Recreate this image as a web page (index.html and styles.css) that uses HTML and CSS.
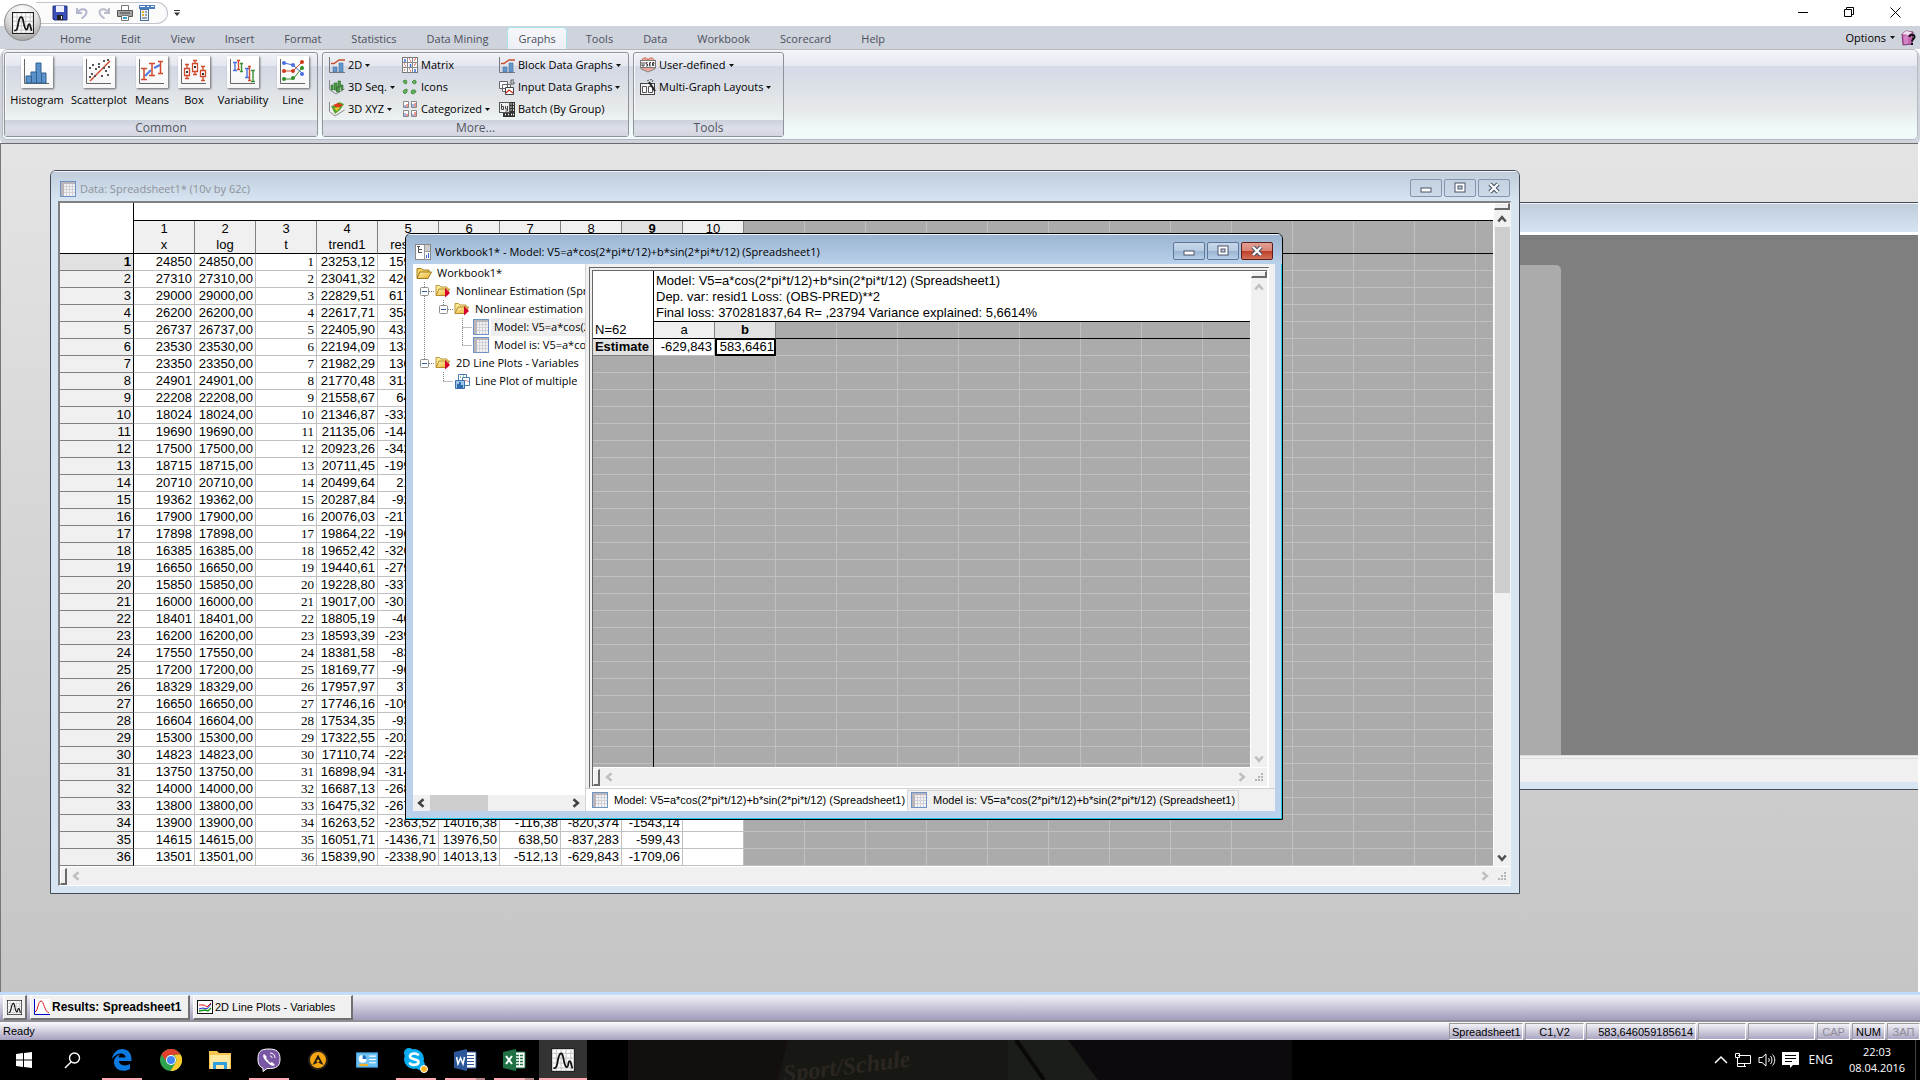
FILE: index.html
```html
<!DOCTYPE html>
<html lang="en">
<head>
<meta charset="utf-8">
<title>STATISTICA - Workbook1*</title>
<link rel="stylesheet" href="styles.css">
</head>
<body>
<svg class="defs" aria-hidden="true">
  <defs>
    <linearGradient id="g-folder" x1="0" y1="0" x2="1" y2="1"><stop offset="0" stop-color="#fff3b0"/><stop offset="1" stop-color="#e8ac28"/></linearGradient>
    <symbol id="i-sheet" viewBox="0 0 16 16"><rect x=".5" y=".5" width="15" height="15" fill="#f2f2f4" stroke="#6d93c4"/><path d="M1 1h14v2H1zM1 1h3v14H1z" fill="#b9b5b8"/><path d="M6.500 3v12M9.500 3v12M12.500 3v12M4 5.500h11M4 8.500h11M4 11.500h11" stroke="#d3d1d8"/></symbol>
    <symbol id="i-book" viewBox="0 0 16 16"><rect x=".5" y=".5" width="15" height="15" fill="#fff" stroke="#888"/><path d="M9.500 1v14M10 7.500h5" stroke="#999"/><path d="M10 1h5v6h-5z" fill="#ccc"/><path d="M2 2.500h3M3.500 3v6M3.500 5.500H7M3.500 8.500H7" stroke="#555" fill="none"/><path d="M11.500 14v-3M13.500 14V9" stroke="#3465c8"/></symbol>
    <symbol id="i-folder" viewBox="0 0 16 16"><path d="M1 13V3.500h4.500l1.500 1.500h6v2" fill="#f3d060" stroke="#a58222"/><path d="M1 13.500 4 7h11.500L12 13.500z" fill="url(#g-folder)" stroke="#a07a1c"/></symbol>
    <symbol id="i-folderrun" viewBox="0 0 16 16"><path d="M1 12V2.500h3.500l1.500 1.500h6v2" fill="#fae892" stroke="#bd9738"/><path d="M1 12.500 4 6h10.500L12 12.500z" fill="url(#g-folder)" stroke="#b48b2c"/><path d="M10 5v9.500l5-4.500z" fill="#d6002c"/></symbol>
    <symbol id="i-plots" viewBox="0 0 16 16"><path d="M4.500 1.500h8v8h-8z" fill="#fff" stroke="#4a7cb5"/><path d="M6 4h1M9 3h1M11 5h1" stroke="#3a3"/><path d="M8.500 4.500h7v8h-7z" fill="#fff" stroke="#4a7cb5"/><path d="m9 11 3-4 3 2" stroke="#d88" fill="none"/><path d="M1.500 7.500h9v8h-9z" fill="#9fc5ea" stroke="#3b6ea6"/><path d="M3 15v-4h2v-2h2v3h2v3z" fill="#2f6cb0"/></symbol>
    <symbol id="i-2d" viewBox="0 0 16 16"><path d="M.5 0v15.500H16" stroke="#777" fill="none"/><path d="M2 6.500h3l5-3.500h6" stroke="#c8502a" stroke-width="1.500" fill="none"/><path d="M4 10h4v5H4zM10 6h4v9h-4z" fill="#6396cc" stroke="#44729f" stroke-width=".6"/></symbol>
    <symbol id="i-3ds" viewBox="0 0 16 16"><path d="M.5 1v9.500L7 15l8.500-5" stroke="#888" fill="none"/><path d="M2 6h2v5H2zM5 4h3v7H5zM9 2h2.500v6H9zM7.500 8h3v5h-3zM12 6h2v5h-2z" fill="#4e9a47" stroke="#2b6b2a" stroke-width=".6"/></symbol>
    <symbol id="i-3dx" viewBox="0 0 16 16"><path d="M.5 1v9.500L6 15l9.500-6" stroke="#888" fill="#f0f0f0"/><path d="m2 5 4-1 4-3 5 2-4 6-5 4z" fill="#57a12c"/><path d="m4 4 5-2 5 2-5 3z" fill="#e03a1c"/><path d="m5 7 6-1-3 4z" fill="#f2c928"/></symbol>
    <symbol id="i-matrix" viewBox="0 0 16 16"><rect x=".5" y=".5" width="15" height="15" fill="#fff" stroke="#777"/><path d="M5.500 0v16M10.500 0v16M0 5.500h16M0 10.500h16" stroke="#888"/><path d="M3 2v3M8.500 7v3M13 12v3" stroke="#3b6be0" stroke-width="1.500"/><path d="M7 2h1M8 4h1M12 3h1M13 2h1M2 7h1M3 9h1M12 8h1M13 7h1M2 13h1M7 12h1M8 14h1" stroke="#e0301c" stroke-width="1.200"/></symbol>
    <symbol id="i-icons" viewBox="0 0 16 16"><path d="m1 2 3-1 1 2-1 2-2-1zM10 3l2-2 2 1v2l-2 1zM2 11l3-1v3l-2 2-2-2zM10 11h3l1 2-3 2-2-1z" fill="#67ad61" stroke="#4b9246"/></symbol>
    <symbol id="i-cat" viewBox="0 0 16 16"><path d="M1.500.5h5v6h-5zM9.500.5h5v6h-5zM1.500 9.500h5v6h-5zM9.500 9.500h5v6h-5z" fill="#fff" stroke="#888"/><path d="M3 6V4M11 6V3M3 15v-3M11 15v-2" stroke="#3b6be0"/><path d="M5 6V3M13 6V2M5 15v-2M13 15v-4" stroke="#e0301c"/></symbol>
    <symbol id="i-input" viewBox="0 0 16 16"><path d="M.5 2.500h8v7h-8zM3.500 5.500h8v7h-8z" fill="#fff" stroke="#666"/><path d="M6.500 8.500h8v7h-8z" fill="#fff" stroke="#444"/><path d="m7 14 3-3 4 3" stroke="#d03018" stroke-width="1.300" fill="none"/><path d="M15 1h-3v4h3V3h-1.500" stroke="#555" fill="none"/></symbol>
    <symbol id="i-batch" viewBox="0 0 16 16"><path d="M10 1h6v15H4v-4" fill="#333"/><path d="M11.500 3h1M14 3h1M11.500 6h1M14 6h1M11.500 9h1M14 9h1M6 13.500h1M9 13.500h1M12 13.500h1M14 13.500h1" stroke="#fff" stroke-width="1.500"/><rect x=".5" y="1.500" width="10" height="10" fill="#eee" stroke="#555"/><path d="M2.500 3v5.500h2v-3h-2M6.500 5v3h2V5v5h-2" stroke="#444" fill="none"/></symbol>
    <symbol id="i-user" viewBox="0 0 16 16"><path d="M2 5a3 3 0 0 1 6-2 3 3 0 0 1 6 2" fill="#f0aa9a" stroke="#d0705c"/><path d="M1 9v3l7 3 7-3V9" fill="#e8a79a" stroke="#888"/><rect x=".5" y="3.500" width="15" height="7" fill="#fff" stroke="#777"/><path d="M2 5v4h2V5M7.500 5.500H6V7h1.500v2H6M11 5.500H9.500v3.500H11M9.500 7H11M12.500 9V5.500H14V7h-1l1 2" stroke="#444" fill="none"/></symbol>
    <symbol id="i-multi" viewBox="0 0 16 16"><rect x=".5" y="4.500" width="14" height="11" fill="#f4f4f4" stroke="#444"/><path d="M2.500 7.500h4v6h-4zM8.500 7.500h4v6h-4z" fill="#fff" stroke="#555"/><path d="m9 3 6 9" stroke="#222" stroke-width="2"/><path d="M7 2l2-1M10 1l2-1M8 4l-1 1M12 3l1-2" stroke="#555"/></symbol>
    <symbol id="i-caret" viewBox="0 0 5 3"><path d="M0 0h5L2.500 3z" fill="#111"/></symbol>
    <symbol id="i-logo" viewBox="0 0 20 20"><rect x=".5" y=".5" width="19" height="19" fill="#fff" stroke="#222"/><path d="M4.500 1v18M8.500 1v18M12.500 1v18M16.500 1v18M1 4.500h18M1 8.500h18M1 12.500h18M1 16.500h18" stroke="#ccc"/><path d="M2 17c3 0 3-3 4-8s3-6 4-2 1 8 3 9c2 0 1-5 2.500-5S17 16 18 17" stroke="#111" stroke-width="1.500" fill="none"/></symbol>
    <symbol id="a-up" viewBox="0 0 8 6"><path d="m1 5 3-3.500L7 5" fill="none" stroke="currentColor" stroke-width="2"/></symbol>
    <symbol id="a-down" viewBox="0 0 8 6"><path d="m1 1 3 3.500L7 1" fill="none" stroke="currentColor" stroke-width="2"/></symbol>
    <symbol id="a-left" viewBox="0 0 6 8"><path d="M5 1 1.500 4 5 7" fill="none" stroke="currentColor" stroke-width="2"/></symbol>
    <symbol id="a-right" viewBox="0 0 6 8"><path d="m1 1 3.500 3L1 7" fill="none" stroke="currentColor" stroke-width="2"/></symbol>
    <symbol id="a-grip" viewBox="0 0 9 9"><path d="M6 0h2v2H6zM3 3h2v2H3zM6 3h2v2H6zM0 6h2v2H0zM3 6h2v2H3zM6 6h2v2H6z" fill="#b4b4b4"/></symbol>
    <symbol id="w-min" viewBox="0 0 12 12"><rect x="1" y="6" width="10" height="4" fill="#fff" stroke="#4b5368"/></symbol>
    <symbol id="w-max" viewBox="0 0 12 12"><rect x="1" y="1" width="10" height="9" fill="#fff" stroke="#4b5368"/><rect x="4" y="4" width="4" height="3" fill="#c5d3e2" stroke="#4b5368"/></symbol>
    <symbol id="w-close" viewBox="0 0 12 12"><path d="m2 2 8 8M10 2l-8 8" stroke="#4b5368" stroke-width="4.500"/><path d="m2 2 8 8M10 2l-8 8" stroke="#fff" stroke-width="2.200"/></symbol>
  </defs>
</svg>

<header class="app-title">
  <button class="orb" aria-label="Application menu"><svg width="22" height="22"><use href="#i-logo"/></svg></button>
  <div class="quick">
    <button aria-label="Save"><svg width="16" height="16" viewBox="0 0 16 16"><path d="M1 1h14v14H2l-1-1z" fill="#3b4fb8" stroke="#26327f"/><path d="M4 1h8v6H4z" fill="#eef"/><path d="M5 10h6v5H5z" fill="#222"/><path d="M9 11h1v3H9z" fill="#fff"/></svg></button>
    <button aria-label="Undo"><svg width="16" height="16" viewBox="0 0 16 16"><path d="M3 3v5h5M3.500 7.500C6 3.500 12 3 12.500 7c0 3-2 4.500-5 6.500" fill="none" stroke="#b3b7cd" stroke-width="2"/></svg></button>
    <button aria-label="Redo"><svg width="16" height="16" viewBox="0 0 16 16"><path d="M13 3v5H8M12.500 7.500C10 3.500 4 3 3.500 7c0 3 2 4.500 5 6.500" fill="none" stroke="#b9bcc9" stroke-width="2"/></svg></button>
    <button aria-label="Print"><svg width="16" height="16" viewBox="0 0 16 16"><path d="M4.500.5h7v5h-7z" fill="#fff" stroke="#777"/><path d="M.5 5.500h15v6H.5z" fill="#a5a5a5" stroke="#555"/><path d="M3 8h10" stroke="#444"/><path d="M4.500 10.500h7v5h-7z" fill="#fff" stroke="#777"/><path d="M6 13h4" stroke="#3aa0d8" stroke-width="2"/></svg></button>
    <button aria-label="Layout"><svg width="16" height="16" viewBox="0 0 16 16"><path d="M0 0h16v4H0z" fill="#4a7dc0"/><path d="M1 1.500h5M8 1.500h2M12 1.500h3" stroke="#fff"/><rect x="1.500" y="4.500" width="8" height="11" fill="#e8f1fb" stroke="#4a6f9f"/><path d="M3 7h2M3 10h2" stroke="#e0b020" stroke-width="2"/><path d="M6 7h2M6 10h2M3 13h5" stroke="#555"/></svg></button>
  </div>
  <button class="quick-more" aria-label="Customize toolbar"><svg width="6" height="6" viewBox="0 0 6 6"><path d="M0 .5h6" stroke="#333"/><path d="M0 2.500h6L3 6z" fill="#333"/></svg></button>
  <div class="win-controls">
    <button aria-label="Minimize"><svg width="11" height="11"><path d="M0 5.500h10" stroke="#000"/></svg></button>
    <button aria-label="Restore"><svg width="11" height="11"><path d="M.5 2.500h7v7h-7zM2.500 2V.5h7v7H8" fill="none" stroke="#000"/></svg></button>
    <button aria-label="Close"><svg width="11" height="11"><path d="m.5.5 10 10M10.500.5l-10 10" stroke="#000"/></svg></button>
  </div>
</header>

<nav class="tabs">
  <button>Home</button><button>Edit</button><button>View</button><button>Insert</button><button>Format</button><button>Statistics</button><button>Data Mining</button><button class="on">Graphs</button><button>Tools</button><button>Data</button><button>Workbook</button><button>Scorecard</button><button>Help</button>
  <div class="options">
    <button>Options<svg width="5" height="3"><use href="#i-caret"/></svg></button>
    <button aria-label="Help"><svg width="16" height="16" viewBox="0 0 16 16"><path d="m1 4 4-3 7 1-1 12-9 1z" fill="#c468b4" stroke="#7b3a72"/><path d="m1 4 4-3 6 1-3 3z" fill="#f3e3f0"/><path d="M4 6v8M6 5v9" stroke="#e2a3d8"/><path d="M8.500 7c0-3 5-3 5 0 0 2-2.500 2-2.500 4.500M11 13v2" stroke="#111" stroke-width="2" fill="none"/></svg></button>
  </div>
</nav>

<section class="ribbon">
  <div class="group common">
    <div class="big-row">
      <button><svg class="tile" width="32" height="32" viewBox="0 0 32 32"><path d="M3.500 3v24.500H28" stroke="#666" fill="none"/><path d="M5 27v-7h5v-4h5V7h5v10h5v10z" fill="#5b92cc" stroke="#315f90"/><path d="M10.500 20v7M15.500 16v11M20.500 17v10" stroke="#315f90"/></svg>Histogram</button>
      <button><svg class="tile" width="32" height="32" viewBox="0 0 32 32"><path d="M3.500 3v24.500H28" stroke="#666" fill="none"/><path d="M7 25 27 5" stroke="#d04a2c" stroke-width="1.500"/><path d="M6 12h2M9 9h2M12 13h2M15 8h2M20 5h2M24 4h2M8 18h2M11 20h2M18 20h2M22 15h2M24 19h2M20 12h2M15 11h2M6 21h2M25 11h2" stroke="#555" stroke-width="2"/></svg>Scatterplot</button>
      <button><svg class="tile" width="32" height="32" viewBox="0 0 32 32"><path d="M3.500 3v24.500H28" stroke="#666" fill="none"/><path d="m9 20 6-6M18 12l6-3" stroke="#4a7de0" stroke-width="2"/><path d="M5 12.500h6M5 23.500h6M8 12v11M13 7.500h6M13 19.500h6M16 8v11M22 5.500h5M22 17.500h5M24.500 6v11" stroke="#d04a2c" stroke-width="1.500"/></svg>Means</button>
      <button><svg class="tile" width="32" height="32" viewBox="0 0 32 32"><path d="M3.500 3v24.500H28" stroke="#666" fill="none"/><path d="M6.500 12.500h5v7h-5zM14.500 7.500h5v8h-5zM22.500 14.500h5v6h-5zM9 8v4M9 20v3M17 4v3M17 16v3M25 10v4M25 21v3M7 8.500h4M7 22.500h4M15 4.500h4M15 18.500h4M23 10.500h4M23 24.500h4" stroke="#d04a2c" stroke-width="1.300" fill="none"/><path d="M8 16h2M16 11h2M24 18h2" stroke="#333" stroke-width="2"/></svg>Box</button>
      <button><svg class="tile" width="32" height="32" viewBox="0 0 32 32"><path d="M3.500 3v24.500H28" stroke="#666" fill="none"/><path d="M6 6.500h4M6 14.500h4M8 6v8M18 12.500h4M18 21.500h4M20 12v9" stroke="#4a6de0" stroke-width="1.400"/><path d="M10 4.500h3M10 13.500h3M11.500 5v8M21 10.500h3M21 24.500h3M22.500 11v13" stroke="#d04a2c" stroke-width="1.400"/><path d="M13 7.500h3M13 15.500h3M14.500 8v7M24 14.500h4M24 25.500h4M26 15v10" stroke="#3c8f35" stroke-width="1.400"/></svg>Variability</button>
      <button><svg class="tile" width="32" height="32" viewBox="0 0 32 32"><path d="M3.500 3v24.500H28" stroke="#666" fill="none"/><path d="m7 7 9 2 9 8" stroke="#4a6de0" fill="none"/><path d="M7 15h9l9-9" stroke="#d04a2c" fill="none"/><path d="M7 23h9l9-11" stroke="#3c8f35" fill="none"/><g fill="#4a6de0"><circle cx="7" cy="7" r="2"/><circle cx="16" cy="9" r="2"/><circle cx="25" cy="18" r="2"/></g><g fill="#d03a1c"><circle cx="7" cy="15" r="2"/><circle cx="16" cy="15" r="2"/><circle cx="25" cy="6" r="2"/></g><g fill="#2f8f28"><circle cx="7" cy="23" r="2"/><circle cx="16" cy="22" r="2"/><circle cx="25" cy="12" r="2"/></g></svg>Line</button>
    </div>
    <h2>Common</h2>
  </div>
  <div class="group more">
    <div class="small-grid">
      <button><svg width="16" height="16"><use href="#i-2d"/></svg>2D<svg width="5" height="3"><use href="#i-caret"/></svg></button>
      <button><svg width="16" height="16"><use href="#i-matrix"/></svg>Matrix</button>
      <button><svg width="16" height="16"><use href="#i-2d"/></svg>Block Data Graphs<svg width="5" height="3"><use href="#i-caret"/></svg></button>
      <button><svg width="16" height="16"><use href="#i-3ds"/></svg>3D Seq.<svg width="5" height="3"><use href="#i-caret"/></svg></button>
      <button><svg width="16" height="16"><use href="#i-icons"/></svg>Icons</button>
      <button><svg width="16" height="16"><use href="#i-input"/></svg>Input Data Graphs<svg width="5" height="3"><use href="#i-caret"/></svg></button>
      <button><svg width="16" height="16"><use href="#i-3dx"/></svg>3D XYZ<svg width="5" height="3"><use href="#i-caret"/></svg></button>
      <button><svg width="16" height="16"><use href="#i-cat"/></svg>Categorized<svg width="5" height="3"><use href="#i-caret"/></svg></button>
      <button><svg width="16" height="16"><use href="#i-batch"/></svg>Batch (By Group)</button>
    </div>
    <h2>More...</h2>
  </div>
  <div class="group tools">
    <div class="small-grid">
      <button><svg width="16" height="16"><use href="#i-user"/></svg>User-defined<svg width="5" height="3"><use href="#i-caret"/></svg></button>
      <button><svg width="16" height="16"><use href="#i-multi"/></svg>Multi-Graph Layouts<svg width="5" height="3"><use href="#i-caret"/></svg></button>
    </div>
    <h2>Tools</h2>
  </div>
</section>

<main class="mdi">
  <section class="window back">
    <div class="titlebar"></div>
    <div class="back-body"><div class="back-panel"></div></div>
    <div class="back-foot"></div>
  </section>

  <section class="window data">
    <div class="titlebar"><svg width="16" height="16"><use href="#i-sheet"/></svg><h1>Data: Spreadsheet1* (10v by 62c)</h1>
      <button aria-label="Minimize"><svg width="12" height="12"><use href="#w-min"/></svg></button><button aria-label="Maximize"><svg width="12" height="12"><use href="#w-max"/></svg></button><button aria-label="Close"><svg width="12" height="12"><use href="#w-close"/></svg></button>
    </div>
    <div class="frame">
      <div class="view">
        <table>
          <colgroup><col class="c-head"><col span="10" class="c-val"><col></colgroup>
          <thead>
            <tr class="strip"><td rowspan="2" class="corner"></td><td colspan="11"></td></tr>
            <tr class="names"><th>1<br>x</th><th>2<br>log</th><th>3<br>t</th><th>4<br>trend1</th><th>5<br>resid1</th><th>6</th><th>7</th><th>8</th><th class="on">9</th><th>10</th><td class="filler"></td></tr>
          </thead>
          <tbody>
            <tr><th class="on">1</th><td>24850</td><td>24850,00</td><td>1</td><td>23253,12</td><td>1596,88</td><td></td><td></td><td></td><td></td><td></td></tr>
            <tr><th>2</th><td>27310</td><td>27310,00</td><td>2</td><td>23041,32</td><td>4268,68</td><td></td><td></td><td></td><td></td><td></td></tr>
            <tr><th>3</th><td>29000</td><td>29000,00</td><td>3</td><td>22829,51</td><td>6170,49</td><td></td><td></td><td></td><td></td><td></td></tr>
            <tr><th>4</th><td>26200</td><td>26200,00</td><td>4</td><td>22617,71</td><td>3582,29</td><td></td><td></td><td></td><td></td><td></td></tr>
            <tr><th>5</th><td>26737</td><td>26737,00</td><td>5</td><td>22405,90</td><td>4331,10</td><td></td><td></td><td></td><td></td><td></td></tr>
            <tr><th>6</th><td>23530</td><td>23530,00</td><td>6</td><td>22194,09</td><td>1335,91</td><td></td><td></td><td></td><td></td><td></td></tr>
            <tr><th>7</th><td>23350</td><td>23350,00</td><td>7</td><td>21982,29</td><td>1367,71</td><td></td><td></td><td></td><td></td><td></td></tr>
            <tr><th>8</th><td>24901</td><td>24901,00</td><td>8</td><td>21770,48</td><td>3130,52</td><td></td><td></td><td></td><td></td><td></td></tr>
            <tr><th>9</th><td>22208</td><td>22208,00</td><td>9</td><td>21558,67</td><td>649,33</td><td></td><td></td><td></td><td></td><td></td></tr>
            <tr><th>10</th><td>18024</td><td>18024,00</td><td>10</td><td>21346,87</td><td>-3322,87</td><td></td><td></td><td></td><td></td><td></td></tr>
            <tr><th>11</th><td>19690</td><td>19690,00</td><td>11</td><td>21135,06</td><td>-1445,06</td><td></td><td></td><td></td><td></td><td></td></tr>
            <tr><th>12</th><td>17500</td><td>17500,00</td><td>12</td><td>20923,26</td><td>-3423,26</td><td></td><td></td><td></td><td></td><td></td></tr>
            <tr><th>13</th><td>18715</td><td>18715,00</td><td>13</td><td>20711,45</td><td>-1996,45</td><td></td><td></td><td></td><td></td><td></td></tr>
            <tr><th>14</th><td>20710</td><td>20710,00</td><td>14</td><td>20499,64</td><td>210,36</td><td></td><td></td><td></td><td></td><td></td></tr>
            <tr><th>15</th><td>19362</td><td>19362,00</td><td>15</td><td>20287,84</td><td>-925,84</td><td></td><td></td><td></td><td></td><td></td></tr>
            <tr><th>16</th><td>17900</td><td>17900,00</td><td>16</td><td>20076,03</td><td>-2176,03</td><td></td><td></td><td></td><td></td><td></td></tr>
            <tr><th>17</th><td>17898</td><td>17898,00</td><td>17</td><td>19864,22</td><td>-1966,22</td><td></td><td></td><td></td><td></td><td></td></tr>
            <tr><th>18</th><td>16385</td><td>16385,00</td><td>18</td><td>19652,42</td><td>-3267,42</td><td></td><td></td><td></td><td></td><td></td></tr>
            <tr><th>19</th><td>16650</td><td>16650,00</td><td>19</td><td>19440,61</td><td>-2790,61</td><td></td><td></td><td></td><td></td><td></td></tr>
            <tr><th>20</th><td>15850</td><td>15850,00</td><td>20</td><td>19228,80</td><td>-3378,80</td><td></td><td></td><td></td><td></td><td></td></tr>
            <tr><th>21</th><td>16000</td><td>16000,00</td><td>21</td><td>19017,00</td><td>-3017,00</td><td></td><td></td><td></td><td></td><td></td></tr>
            <tr><th>22</th><td>18401</td><td>18401,00</td><td>22</td><td>18805,19</td><td>-404,19</td><td></td><td></td><td></td><td></td><td></td></tr>
            <tr><th>23</th><td>16200</td><td>16200,00</td><td>23</td><td>18593,39</td><td>-2393,39</td><td></td><td></td><td></td><td></td><td></td></tr>
            <tr><th>24</th><td>17550</td><td>17550,00</td><td>24</td><td>18381,58</td><td>-831,58</td><td></td><td></td><td></td><td></td><td></td></tr>
            <tr><th>25</th><td>17200</td><td>17200,00</td><td>25</td><td>18169,77</td><td>-969,77</td><td></td><td></td><td></td><td></td><td></td></tr>
            <tr><th>26</th><td>18329</td><td>18329,00</td><td>26</td><td>17957,97</td><td>371,03</td><td></td><td></td><td></td><td></td><td></td></tr>
            <tr><th>27</th><td>16650</td><td>16650,00</td><td>27</td><td>17746,16</td><td>-1096,16</td><td></td><td></td><td></td><td></td><td></td></tr>
            <tr><th>28</th><td>16604</td><td>16604,00</td><td>28</td><td>17534,35</td><td>-930,35</td><td></td><td></td><td></td><td></td><td></td></tr>
            <tr><th>29</th><td>15300</td><td>15300,00</td><td>29</td><td>17322,55</td><td>-2022,55</td><td></td><td></td><td></td><td></td><td></td></tr>
            <tr><th>30</th><td>14823</td><td>14823,00</td><td>30</td><td>17110,74</td><td>-2287,74</td><td></td><td></td><td></td><td></td><td></td></tr>
            <tr><th>31</th><td>13750</td><td>13750,00</td><td>31</td><td>16898,94</td><td>-3148,94</td><td></td><td></td><td></td><td></td><td></td></tr>
            <tr><th>32</th><td>14000</td><td>14000,00</td><td>32</td><td>16687,13</td><td>-2687,13</td><td></td><td></td><td></td><td></td><td></td></tr>
            <tr><th>33</th><td>13800</td><td>13800,00</td><td>33</td><td>16475,32</td><td>-2675,32</td><td></td><td></td><td></td><td></td><td></td></tr>
            <tr><th>34</th><td>13900</td><td>13900,00</td><td>34</td><td>16263,52</td><td>-2363,52</td><td>14016,38</td><td>-116,38</td><td>-820,374</td><td>-1543,14</td><td></td></tr>
            <tr><th>35</th><td>14615</td><td>14615,00</td><td>35</td><td>16051,71</td><td>-1436,71</td><td>13976,50</td><td>638,50</td><td>-837,283</td><td>-599,43</td><td></td></tr>
            <tr><th>36</th><td>13501</td><td>13501,00</td><td>36</td><td>15839,90</td><td>-2338,90</td><td>14013,13</td><td>-512,13</td><td>-629,843</td><td>-1709,06</td><td></td></tr>
          </tbody>
        </table>
      </div>
      <div class="vbar live"><span class="split"></span><svg width="10" height="8"><use href="#a-up"/></svg><span class="thumb"></span><svg class="end" width="10" height="8"><use href="#a-down"/></svg></div>
      <div class="hbar"><span class="split"></span><svg width="8" height="10"><use href="#a-left"/></svg><svg class="end" width="8" height="10"><use href="#a-right"/></svg><svg width="9" height="9"><use href="#a-grip"/></svg></div>
    </div>
  </section>

  <section class="window book">
    <div class="titlebar"><svg width="16" height="16"><use href="#i-book"/></svg><h1>Workbook1* - Model: V5=a*cos(2*pi*t/12)+b*sin(2*pi*t/12) (Spreadsheet1)</h1>
      <button aria-label="Minimize"><svg width="12" height="12"><use href="#w-min"/></svg></button><button aria-label="Maximize"><svg width="12" height="12"><use href="#w-max"/></svg></button><button class="close" aria-label="Close"><svg width="12" height="12"><use href="#w-close"/></svg></button>
    </div>
    <div class="book-body">
      <aside class="tree">
        <svg class="tree-lines" width="80" height="130"><g stroke="#808080" stroke-dasharray="1 1" fill="none"><path d="M11.500 18v81M16 27.500h6M30.500 36v5M35 45.500h6M49.500 54v27M49.500 63.500h10M49.500 81.500h10M16 99.500h6M30.500 108v9M30.500 117.500h10"/></g><g fill="#fff" stroke="#8f8f8f"><rect x="7.500" y="23.500" width="8" height="8" rx="1"/><rect x="26.500" y="41.500" width="8" height="8" rx="1"/><rect x="7.500" y="95.500" width="8" height="8" rx="1"/></g><path d="M9 27.500h5M28 45.500h5M9 99.500h5" stroke="#3257a8"/></svg>
        <ul>
          <li><svg width="16" height="16"><use href="#i-folder"/></svg><span>Workbook1*</span></li>
          <li class="l1"><svg width="16" height="16"><use href="#i-folderrun"/></svg><span>Nonlinear Estimation (Spreadsheet1)</span></li>
          <li class="l2"><svg width="16" height="16"><use href="#i-folderrun"/></svg><span>Nonlinear estimation</span></li>
          <li class="l3"><svg width="16" height="16"><use href="#i-sheet"/></svg><span class="sel">Model: V5=a*cos(2*pi*t/12)</span></li>
          <li class="l3"><svg width="16" height="16"><use href="#i-sheet"/></svg><span>Model is: V5=a*cos(2*pi*t/12)</span></li>
          <li class="l1"><svg width="16" height="16"><use href="#i-folderrun"/></svg><span>2D Line Plots - Variables</span></li>
          <li class="l2"><svg width="16" height="16"><use href="#i-plots"/></svg><span>Line Plot of multiple</span></li>
        </ul>
        <div class="tree-bar"><svg width="8" height="10"><use href="#a-left"/></svg><span class="thumb"></span><svg class="end" width="8" height="10"><use href="#a-right"/></svg></div>
      </aside>
      <div class="pane">
        <div class="frame">
          <div class="view">
            <table>
              <colgroup><col class="c-val"><col span="2" class="c-val"><col></colgroup>
              <thead>
                <tr class="strip"><td rowspan="2" class="corner">N=62</td><td colspan="3">Model: V5=a*cos(2*pi*t/12)+b*sin(2*pi*t/12) (Spreadsheet1)<br>Dep. var: resid1 Loss: (OBS-PRED)**2<br>Final loss: 370281837,64 R= ,23794 Variance explained: 5,6614%</td></tr>
                <tr class="names"><th>a</th><th class="on">b</th><td class="filler"></td></tr>
              </thead>
              <tbody>
                <tr><th class="on">Estimate</th><td>-629,843</td><td class="cursor">583,6461</td></tr>
              </tbody>
            </table>
          </div>
          <div class="vbar"><span class="split"></span><svg width="10" height="8"><use href="#a-up"/></svg><svg class="end" width="10" height="8"><use href="#a-down"/></svg></div>
          <div class="hbar"><span class="split"></span><svg width="8" height="10"><use href="#a-left"/></svg><svg class="end" width="8" height="10"><use href="#a-right"/></svg><svg width="9" height="9"><use href="#a-grip"/></svg></div>
        </div>
        <div class="sheet-tabs">
          <button class="on"><svg width="16" height="16"><use href="#i-sheet"/></svg>Model: V5=a*cos(2*pi*t/12)+b*sin(2*pi*t/12) (Spreadsheet1)</button>
          <button><svg width="16" height="16"><use href="#i-sheet"/></svg>Model is: V5=a*cos(2*pi*t/12)+b*sin(2*pi*t/12) (Spreadsheet1)</button>
        </div>
      </div>
    </div>
  </section>
</main>

<div class="docbar">
  <button class="mini" aria-label="Analysis"><svg width="15" height="15"><use href="#i-logo"/></svg></button>
  <button class="doc on"><svg width="16" height="16" viewBox="0 0 16 16"><rect width="16" height="16" fill="#fff"/><path d="M.5 0v15.500H16" stroke="#00c" fill="none"/><path d="M1 13C4 12 4 2 7 2s3 10 8 12" fill="none" stroke="#e01818"/></svg>Results: Spreadsheet1</button>
  <button class="doc"><svg width="16" height="16" viewBox="0 0 16 16"><rect x=".5" y="1.500" width="15" height="13" fill="#fff" stroke="#111"/><path d="M2 6h5l3 2 4-4" stroke="#e01818" fill="none"/><path d="m2 10 4-1 4 1 4-5" stroke="#22c" fill="none"/><path d="m2 12 6-1 3 1 3-3" stroke="#1a9a1a" fill="none" stroke-width="1.500"/></svg>2D Line Plots - Variables</button>
</div>

<footer class="status">
  <span class="ready">Ready</span>
  <span class="p p1">Spreadsheet1</span><span class="p p2">C1,V2</span><span class="p p3">583,646059185614</span><span class="p p4"></span><span class="p p5"></span><span class="p p6 off">CAP</span><span class="p p6">NUM</span><span class="p p6 off">ЗАП</span>
</footer>

<footer class="taskbar">
  <button aria-label="Start"><svg width="18" height="18" viewBox="0 0 18 18"><path d="m1 3 7-1v6.500H1zM9 2l8-1v7.500H9zM1 9.500h7V16l-7-1zM9 9.500h8V17l-8-1z" fill="#fff"/></svg></button>
  <button aria-label="Search"><svg width="18" height="18" viewBox="0 0 18 18"><circle cx="10.500" cy="7" r="5" fill="none" stroke="#fff" stroke-width="1.400"/><path d="m7 11-6 6" stroke="#fff" stroke-width="1.500"/></svg></button>
  <button class="run" aria-label="Edge"><svg width="24" height="24" viewBox="0 0 24 24"><path d="M2 11C3 4 8 1 12 1c6 0 10 4 9.500 12H9c0 4 6 6 11 3v5c-7 4-16 1-16-7 0-4 3-6.500 6-7.500-1 1-1.500 2-1.500 3h7c0-5-8-6-13.500 1.500z" fill="#0b7be0"/></svg></button>
  <button aria-label="Chrome"><svg width="22" height="22" viewBox="0 0 22 22"><circle cx="11" cy="11" r="11" fill="#2fa24f"/><path d="M1.500 5.500A11 11 0 0 1 20.500 5.500L11 6a5 5 0 0 0-5 6z" fill="#e2402f"/><path d="M20.500 5.500A11 11 0 0 1 10.500 22L16 13c1-3 0-5-2-7z" fill="#fbcb2d"/><circle cx="11" cy="11" r="5" fill="#fff"/><circle cx="11" cy="11" r="4" fill="#4285f4"/></svg></button>
  <button aria-label="File Explorer"><svg width="22" height="20" viewBox="0 0 22 20"><path d="M0 1h8l2 2h12v16H0z" fill="#f4c64f"/><path d="M1 5h20v14H1z" fill="#ffe9a0"/><path d="M4 19v-7h14v7h-3v-4H7v4z" fill="#2f9fe0"/></svg></button>
  <button class="run" aria-label="Viber"><svg width="24" height="24" viewBox="0 0 24 24"><path d="M12 1C3 1 1 4 1 11c0 6 2 8 5 9v3.500l4-3C20 21 23 18 23 11S20 1 12 1z" fill="#7a57a4" stroke="#fff"/><path d="M7 6c-2 2 0 5 3 8s6 5 8 3l-3-3-2 1-4-5 1-1z" fill="#fff"/><path d="M13 5c3 0 5 2 5 5M13 8c1.500 0 2 1 2 2" stroke="#fff" fill="none"/></svg></button>
  <button aria-label="AIMP"><svg width="20" height="20" viewBox="0 0 20 20"><circle cx="10" cy="10" r="9" fill="#f7a613" stroke="#2b2418" stroke-width="2"/><path d="M10 4.500 15.500 15 10 12.500 4.500 15z" fill="#201a10"/><circle cx="10" cy="11" r="1.500" fill="#f7a613"/></svg></button>
  <button aria-label="Control panel"><svg width="22" height="18" viewBox="0 0 20 16"><path d="M0 1h20v14H0z" fill="#3f9fdf"/><path d="M1 2h18v12H1z" fill="#6cc0f2"/><circle cx="6" cy="7" r="3.500" fill="#fff"/><path d="M6 7V3.500A3.500 3.500 0 0 1 9.500 7z" fill="#1b6fc0"/><path d="M12 4.500h6M12 7.500h6M12 10.500h6" stroke="#fff"/><path d="M3 12.500h8" stroke="#f3b229" stroke-width="2"/></svg></button>
  <button class="run" aria-label="Skype"><svg width="26" height="26" viewBox="0 0 26 26"><circle cx="11" cy="12" r="10" fill="#0aaef0"/><circle cx="6" cy="6" r="5" fill="#0aaef0"/><circle cx="17" cy="18" r="5" fill="#0aaef0"/><path d="M15.500 8.500C14 5.500 7 6 7 9.500s8.500 2 8.500 5.500c0 3.500-7.500 4-9 .5" stroke="#fff" stroke-width="2.600" fill="none"/><circle cx="21" cy="22" r="3.500" fill="#ffb321" stroke="#fff"/></svg></button>
  <button class="run multi" aria-label="Word"><svg width="24" height="22" viewBox="0 0 24 22"><path d="M12 3h11v16H12z" fill="#fff" stroke="#2b579a"/><path d="M14 6.500h7M14 9.500h7M14 12.500h7M14 15.500h7" stroke="#2b579a"/><path d="m1 3 13-3v22L1 19z" fill="#2b579a"/><path d="m3.500 8 1.500 7 2.500-6L10 15l1.500-7" stroke="#fff" stroke-width="1.500" fill="none"/></svg></button>
  <button class="run multi" aria-label="Excel"><svg width="24" height="22" viewBox="0 0 24 22"><path d="M12 3h11v16H12z" fill="#fff" stroke="#1f7244"/><path d="M14 6.500h3M18 6.500h3M14 9.500h3M18 9.500h3M14 12.500h3M18 12.500h3M14 15.500h3M18 15.500h3" stroke="#1f7244" stroke-width="1.500"/><path d="m1 3 13-3v22L1 19z" fill="#1f7244"/><path d="m4 7 6 8M10 7l-6 8" stroke="#fff" stroke-width="2"/></svg></button>
  <button class="run active" aria-label="Statistica"><svg width="24" height="24"><use href="#i-logo"/></svg></button>
  <div class="wall"><svg width="664" height="40" aria-hidden="true"><path d="M0 0h310l30 40H0z" fill="#120f0e"/><path d="M160 0h230l20 40H150z" fill="#171814"/><path d="M380 0h60l30 40h-90z" fill="#1b1d19"/><path d="M388 0l28 40" stroke="#090909" stroke-width="4"/><text x="156" y="42" transform="rotate(-7 156 42)" class="wall-text">Sport/Schule</text></svg></div>
  <div class="tray">
    <svg width="14" height="10" viewBox="0 0 14 10"><path d="m1 8 6-6 6 6" stroke="#fff" stroke-width="1.500" fill="none"/></svg>
    <svg width="18" height="16" viewBox="0 0 18 16"><path d="M4 3.500h12.500v8H4M1.500 1.500h4v4h-4zM3.500 6v8.500H12M10.500 12v2.500" stroke="#fff" fill="none"/></svg>
    <svg width="18" height="16" viewBox="0 0 18 16"><path d="M1 5.500h3l4-3.500v12L4 10.500H1zM10.500 6c1 1 1 3 0 4M12.500 4c2 2 2 6 0 8M14.500 2.500c3 3 3 8 0 11" stroke="#fff" fill="none"/></svg>
    <svg width="17" height="16" viewBox="0 0 17 16"><path d="M0 0h17v13h-6l-3 3v-3H0z" fill="#fff"/><path d="M3 3.500h11M3 6.500h11M3 9.500h7" stroke="#000"/></svg>
    <span>ENG</span>
    <time>22:03<br>08.04.2016</time>
    <i class="peek"></i>
  </div>
</footer>
</body>
</html>
```
FILE: styles.css
```css
* { box-sizing: border-box; }
body {
  margin: 0;
  height: 100vh;
  display: flex;
  flex-direction: column;
  overflow: hidden;
  background: #fff;
  color: #000;
  font: 11px/16px "Open Sans", "Noto Sans", sans-serif;
}
button {
  margin: 0; padding: 0; border: 0; background: none;
  font: inherit; color: inherit;
  display: flex; align-items: center; justify-content: center;
  white-space: nowrap;
}
h1, h2, ul { margin: 0; padding: 0; font: inherit; list-style: none; }
svg { display: block; flex: none; }
.defs { position: absolute; width: 0; height: 0; }

/* application title row */
.app-title { flex: none; height: 26px; display: flex; position: relative; }
.orb {
  position: absolute; left: 4px; top: 4px; z-index: 2;
  width: 37px; height: 37px; border-radius: 50%;
  border: 1px solid #8a8a8a;
  background: radial-gradient(circle at 50% 20%, #fff, #dcdcdc 50%, #a5a5a5 85%, #e5e5e5);
}
.quick {
  margin: 2px 0 0 36px; height: 22px; width: 132px;
  padding: 0 12px 0 16px;
  display: flex; align-items: center; justify-content: space-between;
  border: 1px solid #c3c5cd; border-left: 0;
  border-radius: 0 11px 11px 0;
  background: #fbfbfc;
}
.quick-more { width: 18px; height: 26px; }
.win-controls { margin-left: auto; display: flex; padding-right: 2px; }
.win-controls button { width: 46px; height: 24px; }

/* ribbon tabs */
.tabs { flex: none; height: 23px; background: #cfd3dc; display: flex; padding-left: 45px; color: #4c505c; }
.tabs > button { padding: 2px 15px 0; height: 23px; }
.tabs > .on {
  margin: 1px 4px 0; height: 22px; padding: 0 10px;
  border: 1px solid #a9e4ec; border-bottom: 0; border-radius: 4px 4px 0 0;
  background: linear-gradient(#f6f7fa, #eceff5);
}
.options { margin-left: auto; display: flex; gap: 6px; padding-right: 3px; color: #000; }
.options button { gap: 4px; }

/* ribbon */
.ribbon {
  flex: none; display: flex; gap: 4px; height: 91px;
  margin: 0 2px 3px; padding: 2px 1px;
  border: 1px solid #b5b8be; border-radius: 5px;
  background: linear-gradient(#f4f5f8, #e6e9f1 16px, #d6dae8 16px, #d9dde6 30px, #e6eaea 60px, #effafa 80px, #f0fafc);
  box-shadow: 0 3px 0 2px #cfd3dc;
}
.group {
  display: flex; flex-direction: column;
  border: 1px solid #8f9299; border-radius: 3px;
  background: linear-gradient(#eff1f6, #e4e7ef 13px, #d3d8e5 13px, #d9dde6 28px, #e6eaea 55px, #eef3f3 68px);
  box-shadow: inset 1px 1px 0 #fafafc;
}
.group h2 {
  margin-top: auto; height: 16px; line-height: 16px; text-align: center;
  color: #51555e; font-size: 12px;
  background: linear-gradient(#ccd1dd, #dcdfe9, #d3d6de);
}
.common { width: 314px; }
.more { width: 307px; }
.tools { width: 151px; }
.big-row { display: grid; grid-template-columns: 64px 60px 46px 38px 60px 40px; }
.big-row button { flex-direction: column; gap: 4px; padding-top: 3px; }
.tile { background: linear-gradient(#fff, #f6f6f6); box-shadow: 1px 1px 2px #666; }
.small-grid { display: grid; grid-auto-rows: 22px; padding: 1px 0 0 6px; justify-content: start; }
.more .small-grid { grid-template-columns: 73px 97px 130px; }
.small-grid button { justify-content: flex-start; gap: 3px; }

/* document area */
.mdi {
  flex: 1; min-height: 0; position: relative; overflow: hidden;
  margin-right: 2px; border-left: 1px solid #777; border-top: 1px solid #6b6b6b;
  background: linear-gradient(#e4e4e4, #c5c5c5);
}
.window {
  position: absolute; display: flex; flex-direction: column;
  border: 1px solid #454a54; border-radius: 6px 6px 0 0;
  background: #d7e4f2;
  padding: 0 8px 7px 7px;
  overflow: hidden;
}
.titlebar {
  flex: none; height: 30px; margin: 0 -8px 0 -7px; padding: 6px 9px 0 9px;
  display: flex; align-items: center; gap: 2px;
  background: linear-gradient(#bfcddb, #d7e4f2);
  box-shadow: inset 0 1px 0 #eef4fa;
}
.titlebar h1 { flex: 1; padding-left: 2px; color: #8d9299; white-space: nowrap; }
.titlebar button {
  width: 32px; height: 18px; margin-bottom: 2px;
  border: 1px solid #8394ad; border-radius: 2px;
  background: linear-gradient(#c3d1e1, #cbd9e8);
}
.back { left: 1400px; top: 58px; width: 600px; height: 588px; padding-left: 0; background: #d7e4f2; }
.back-body { flex: 1; margin: 2px -8px 0 0; border-top: 4px double #777; background: #808080; padding-top: 26px; box-shadow: 0 -3px 0 #fff; }
.back-panel { width: 159px; height: 100%; border-radius: 0 5px 0 0; background: #ababab; }
.back-foot { flex: none; height: 27px; margin-right: -8px; background: #f0f0f0; border-top: 4px double #ddd; }
.data { left: 49px; top: 26px; width: 1470px; height: 724px; }

.frame {
  flex: 1; min-height: 0; display: grid;
  grid-template-columns: 1fr 17px; grid-template-rows: 1fr 19px;
  border: 2px solid #808080; border-right-color: #f4f4f4; border-bottom: 1px solid #fff;
  border-right-width: 1px;
  background: #f0f0f0;
}
.view {
  overflow: hidden; position: relative;
  background:
    linear-gradient(#000, #000) 73px 0 / 1px 100% no-repeat,
    repeating-linear-gradient(#0000 0 16px, #c0c0c0 16px 17px),
    repeating-linear-gradient(90deg, #ababab 0 60px, #c0c0c0 60px 61px) 74px 0;
}
.view table { width: 100%; table-layout: fixed; border-collapse: separate; border-spacing: 0; font: 13px/16px "Liberation Sans", Arial, sans-serif; }
.c-head { width: 74px; }
.c-val { width: 61px; }
.view td, .view th { padding: 0; overflow: hidden; white-space: nowrap; }
.view tbody td, .view tbody th {
  height: 17px; text-align: right; padding-right: 2px; background: #fff;
  border-right: 1px solid #c0c0c0; border-bottom: 1px solid #c0c0c0;
}
.view tbody th { font-weight: 400; background: #f0f0f0; border-right-color: #000; border-bottom-color: #808080; }
.view .strip td { height: 18px; background: #fff; border-bottom: 1px solid #000; }
.view .strip .corner { border-right: 1px solid #000; vertical-align: bottom; padding-left: 2px; }
.view .names th { height: 33px; font-weight: 400; background: #f0f0f0; border-right: 1px solid #808080; border-bottom: 1px solid #000; vertical-align: top; }
.view .names .filler { border-bottom: 1px solid #000; background: repeating-linear-gradient(90deg, #ababab 0 60px, #c0c0c0 60px 61px); }
.view tbody th.on, .view .names th.on { font-weight: 700; background: #e1e1e1; }
.data tbody td:nth-child(4) { font-family: "Liberation Serif", "Times New Roman", serif; }

/* scroll bars */
.vbar { display: flex; flex-direction: column; align-items: center; border-left: 1px solid #fff; color: #bfbfbf; padding-bottom: 4px; }
.vbar .split { width: 100%; height: 7px; margin-bottom: 5px; background: #f0f0f0; border: 1px solid #fff; border-right: 2px solid #6a6a6a; border-bottom: 2px solid #6a6a6a; }
.vbar .thumb { width: 15px; height: 366px; margin-top: 4px; background: #cdcdcd; }
.vbar .end { margin-top: auto; }
.live { color: #505050; }
.hbar { grid-column: 1 / 3; display: flex; align-items: center; border-top: 1px solid #fff; color: #bfbfbf; gap: 5px; padding-right: 3px; }
.hbar .split { width: 7px; height: 17px; border: 1px solid #fff; border-right: 2px solid #6a6a6a; border-bottom: 2px solid #6a6a6a; background: #f0f0f0; }
.hbar .end { margin-left: auto; margin-right: 4px; }

/* workbook window */
.book {
  left: 404px; top: 89px; width: 878px; height: 587px;
  border-color: #000; background: #b9d1ea; padding-bottom: 8px;
  box-shadow: inset -1px -1px 0 #1fc8e0;
}
.book .titlebar { height: 30px; background: linear-gradient(#9ab3cf, #b9d1ea); }
.book .titlebar h1 { color: #000; }
.book .titlebar button { border-color: #5d7799; background: linear-gradient(#c8d8ea, #b6cae1 50%, #98b3d1 50%, #b8cfe8); }
.book .titlebar .close { border-color: #5c1f1a; background: linear-gradient(#e3a195, #d98272 50%, #bc3d27 50%, #d4715b); }
.book-body { flex: 1; min-height: 0; display: flex; background: #f0f0f0; margin-right: -1px; }
.tree { width: 173px; flex: none; display: flex; flex-direction: column; position: relative; overflow: hidden; background: #fff; border-right: 1px solid #d5d5d5; }
.tree-lines { position: absolute; left: 0; top: 0; }
.tree ul { flex: 1; padding-left: 3px; }
.tree li { height: 18px; display: flex; align-items: center; gap: 2px; white-space: nowrap; }
.tree li span { flex: 0 1 auto; min-width: 0; overflow: hidden; padding: 0 0 0 3px; line-height: 18px; }
.tree .sel { background: #efefef; }
.l1 { margin-left: 19px; }
.l2 { margin-left: 38px; }
.l3 { margin-left: 57px; }
.tree-bar { height: 16px; display: flex; align-items: center; padding: 0 5px 0 4px; gap: 5px; background: #f0f0f0; color: #404040; }
.tree-bar .thumb { width: 58px; height: 16px; background: #cdcdcd; }
.tree-bar .end { margin-left: auto; }
.pane { flex: 1; min-width: 0; display: flex; flex-direction: column; padding: 3px 6px 0 0; }
.pane .frame { margin: 0 0 0 3px; border-width: 4px 2px 2px 4px; border-style: double; border-color: #666 #fff #fff #666; }
.pane .view {
  background:
    linear-gradient(#000, #000) 60px 0 / 1px 100% no-repeat,
    repeating-linear-gradient(#0000 0 16px, #c0c0c0 16px 17px),
    repeating-linear-gradient(90deg, #ababab 0 60px, #c0c0c0 60px 61px);
}
.pane .view .strip td { height: 51px; padding: 2px 0 0 2px; vertical-align: top; }
.pane .view .strip .corner { vertical-align: bottom; }
.pane .view .names th { height: 17px; }
.pane .view tbody th { text-align: center; }
.pane .view tbody .cursor { border: 2px solid #000; border-width: 1px 2px 2px; padding-right: 0; line-height: 14px; }
.sheet-tabs { flex: none; height: 23px; margin-right: -6px; display: flex; align-items: flex-start; border-top: 1px solid #d0d0d0; font: 11px/16px "Liberation Sans", Arial, sans-serif; }
.sheet-tabs button { height: 20px; margin-top: 1px; padding: 0 3px 2px; gap: 6px; border: 1px solid #d5d5d5; border-bottom: 0; }
.sheet-tabs .on { height: 22px; margin-top: 0; padding: 0 2px 0 6px; background: #fff; border: 0; }

/* document buttons */
.docbar {
  flex: none; height: 30px; display: flex; gap: 3px; padding: 0 3px;
  border-top: 3px solid #c1dcfb; border-bottom: 2px solid #8f8f98;
  background: linear-gradient(#f1f1f8, #a19cbb);
  font: 11px/16px "Liberation Sans", Arial, sans-serif;
}
.docbar button { height: 25px; border: 1px solid #fff; border-right: 2px solid #707070; border-bottom: 2px solid #707070; background: #f0f0f0; }
.docbar .mini { width: 24px; }
.docbar .doc { width: 160px; justify-content: flex-start; gap: 2px; padding-left: 3px; }
.docbar .on { font-weight: 700; font-size: 12px; }

.status {
  flex: none; height: 18px; display: flex; gap: 2px; padding-left: 3px;
  background: linear-gradient(#fbfbfd, #a5a0be);
  font: 11px/16px "Liberation Sans", Arial, sans-serif;
}
.ready { margin-right: auto; padding-top: 1px; }
.p { height: 17px; margin-top: 1px; padding: 0 2px; border: 1px solid #9a9a9a; border-right-color: #fff; border-bottom-color: #fff; text-align: center; overflow: hidden; }
.p1 { width: 74px; } .p2 { width: 59px; } .p3 { width: 110px; text-align: right; } .p4 { width: 48px; } .p5 { width: 67px; } .p6 { width: 33px; }
.off { color: #8e8b98; }

/* system task bar */
.taskbar { flex: none; height: 40px; display: flex; gap: 1px; background: #000; color: #fff; position: relative; }
.taskbar button { width: 48px; height: 40px; position: relative; z-index: 1; }
.run::after { content: ""; position: absolute; left: 4px; right: 4px; bottom: 0; height: 2px; background: #ffaab4; }
.multi::after { background: linear-gradient(90deg, #ffaab4 31px, #b9868c 31px); }
.taskbar .active { background: #333; }
.active::after { left: 0; right: 0; }
.wall { margin-left: 40px; width: 664px; overflow: hidden; background: #0c0a0c; }
.wall-text { font: italic 700 24px "Liberation Serif", serif; fill: #2b2621; }
.tray { margin-left: auto; display: flex; align-items: center; gap: 6px; }
.tray span { padding: 0 8px 0 4px; font-size: 12px; }
.tray time { text-align: center; width: 60px; }
.peek { width: 1px; height: 40px; margin: 0 4px 0 2px; background: #444; }
```
